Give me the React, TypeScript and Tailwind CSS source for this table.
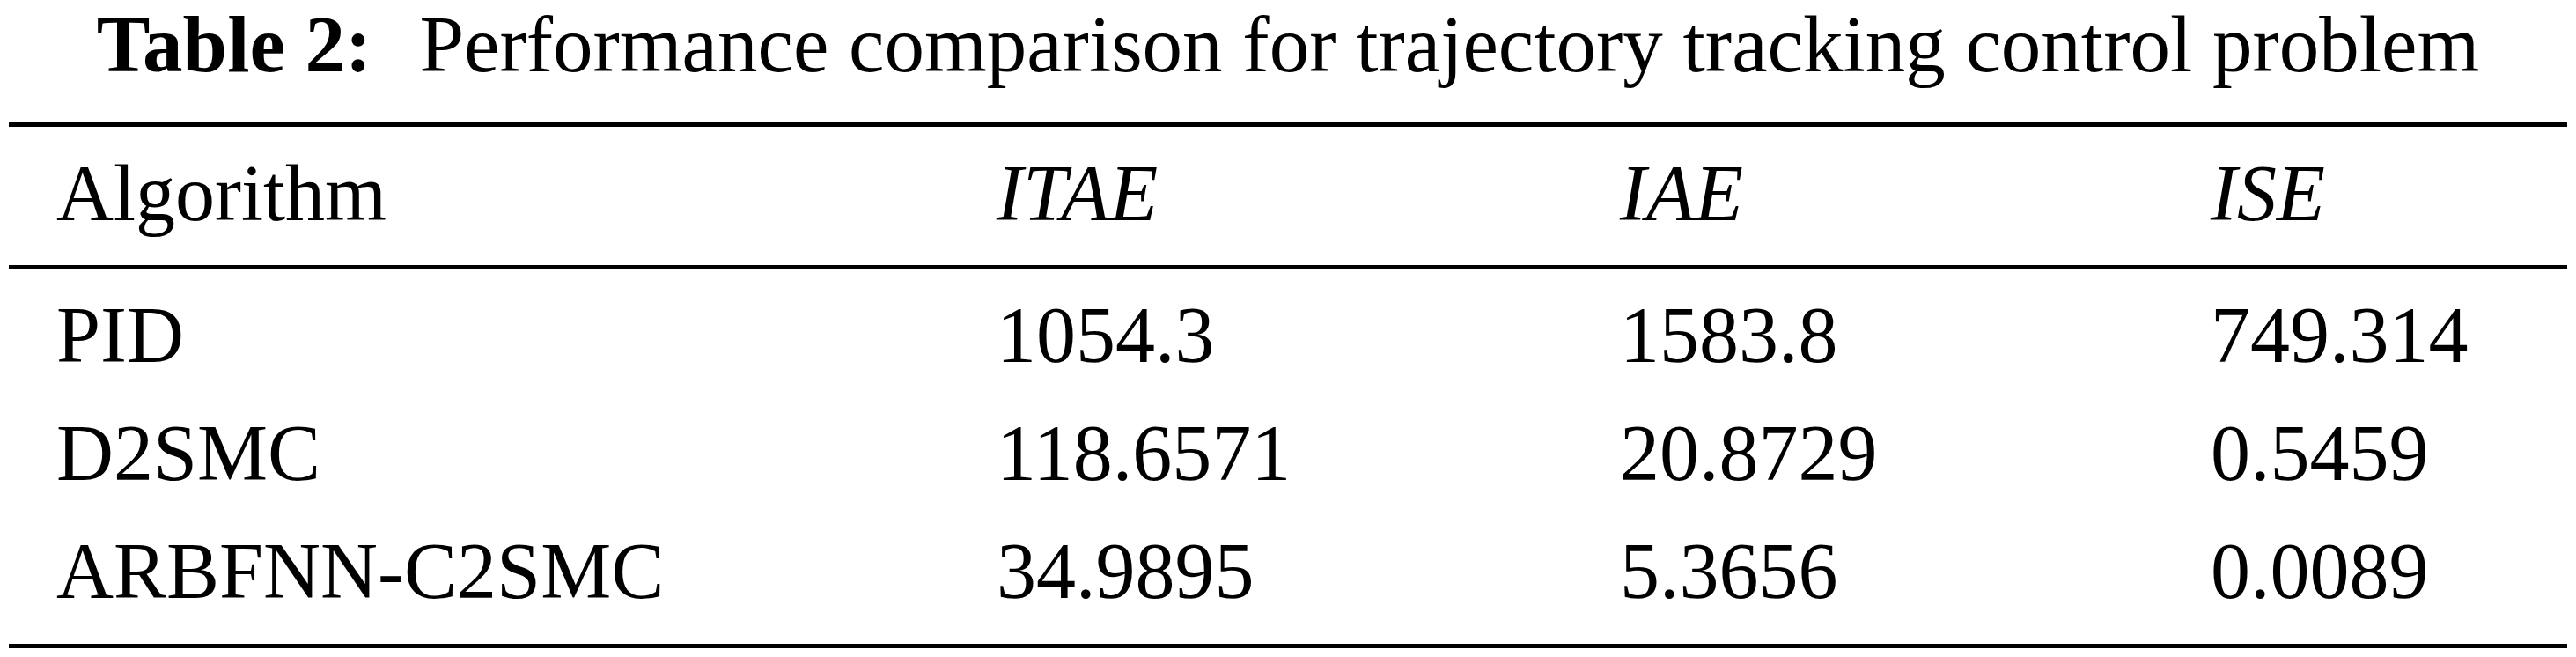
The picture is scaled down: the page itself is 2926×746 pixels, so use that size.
const rows = [
  { name: 'PID', itae: '1054.3', iae: '1583.8', ise: '749.314' },
  { name: 'D2SMC', itae: '118.6571', iae: '20.8729', ise: '0.5459' },
  { name: 'ARBFNN-C2SMC', itae: '34.9895', iae: '5.3656', ise: '0.0089' },
]

const cols = 'grid grid-cols-[1068px_708px_671px_1fr] pl-[54px]'

const App = () => {
  return (
    <main className="w-[2926px] h-[746px] bg-white text-black px-[10px] font-['Liberation_Serif','Times_New_Roman',serif]">
      <h1 className="text-center text-[91px] leading-[101px] whitespace-nowrap">
        <span className="font-bold">Table 2:</span>
        <span className="ml-[54px]">Performance comparison for trajectory tracking control problem</span>
      </h1>

      <section className="mt-[38px] border-t-[5px] border-b-[5px] border-black text-[90px] leading-[134px]">
        <div className={`${cols} pt-[9px] pb-[14px] border-b-[5px] border-black`}>
          <span>Algorithm</span>
          <span className="italic">ITAE</span>
          <span className="italic">IAE</span>
          <span className="italic">ISE</span>
        </div>
        <div className="pt-[8px] pb-[15px]">
          {rows.map(r => (
            <div key={r.name} className={cols}>
              <span>{r.name}</span>
              <span>{r.itae}</span>
              <span>{r.iae}</span>
              <span>{r.ise}</span>
            </div>
          ))}
        </div>
      </section>
    </main>
  )
}

export default App
